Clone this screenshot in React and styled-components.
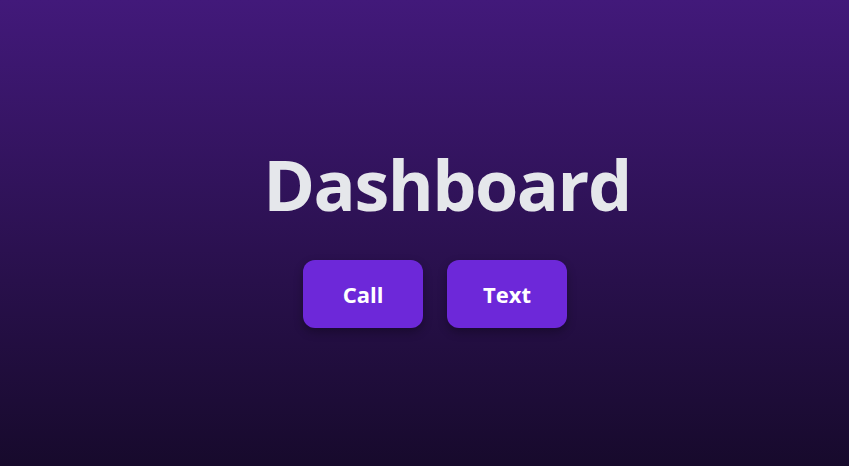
import React from "react";
import styled, {createGlobalStyle} from "styled-components";

const GlobalStyle = createGlobalStyle`
  html, body {
    margin: 0;
    padding: 0;
  }

  body {
    font-family: "Open Sans", "Noto Sans", sans-serif;
  }
`

export default function App() {
   return (
      <>
         <GlobalStyle/>
         <StyledPage>
            <Title>Dashboard</Title>
            <Actions>
               <ActionButton>Call</ActionButton>
               <ActionButton>Text</ActionButton>
            </Actions>
         </StyledPage>
      </>
   )
}

const StyledPage = styled.main`
  box-sizing: border-box;
  height: 466px;
  display: flex;
  flex-direction: column;
  align-items: center;
  justify-content: center;
  padding: 3px 0 0 21px;
  background: linear-gradient(180deg, #42197a 0%, #170a2c 100%);
`

const Title = styled.h1`
  margin: 0 0 34px 24px;
  font-size: 70px;
  font-weight: 700;
  line-height: 1.2;
  color: #e5e7eb;
  letter-spacing: -1.5px;
`

const Actions = styled.div`
  display: flex;
  gap: 24px;
`

const ActionButton = styled.button`
  width: 120px;
  height: 68px;
  border: none;
  border-radius: 12px;
  background: #6d28d9;
  color: #ffffff;
  font-family: inherit;
  font-size: 22px;
  font-weight: 700;
  box-shadow: 0 4px 10px rgba(0, 0, 0, 0.3);
  cursor: pointer;
`
